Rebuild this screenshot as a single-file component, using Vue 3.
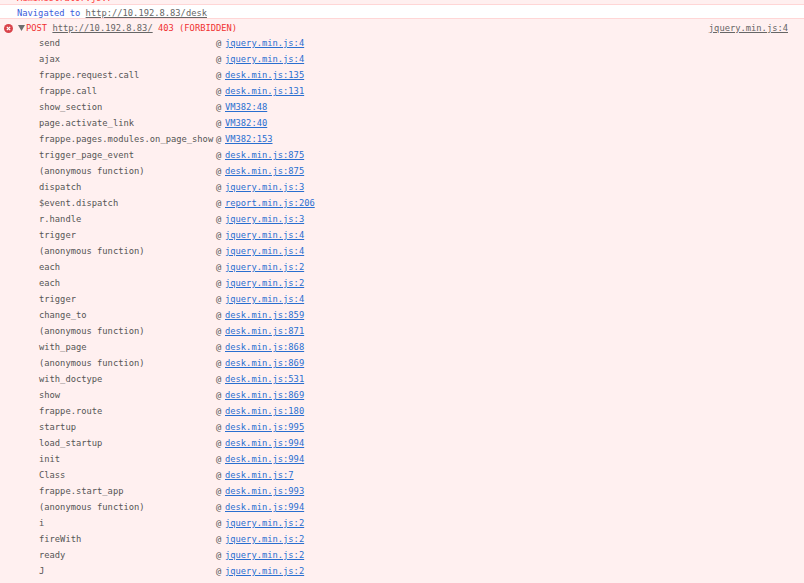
<script setup>
const rows = [
  ['send', 'jquery.min.js:4'],
  ['ajax', 'jquery.min.js:4'],
  ['frappe.request.call', 'desk.min.js:135'],
  ['frappe.call', 'desk.min.js:131'],
  ['show_section', 'VM382:48'],
  ['page.activate_link', 'VM382:40'],
  ['frappe.pages.modules.on_page_show', 'VM382:153'],
  ['trigger_page_event', 'desk.min.js:875'],
  ['(anonymous function)', 'desk.min.js:875'],
  ['dispatch', 'jquery.min.js:3'],
  ['$event.dispatch', 'report.min.js:206'],
  ['r.handle', 'jquery.min.js:3'],
  ['trigger', 'jquery.min.js:4'],
  ['(anonymous function)', 'jquery.min.js:4'],
  ['each', 'jquery.min.js:2'],
  ['each', 'jquery.min.js:2'],
  ['trigger', 'jquery.min.js:4'],
  ['change_to', 'desk.min.js:859'],
  ['(anonymous function)', 'desk.min.js:871'],
  ['with_page', 'desk.min.js:868'],
  ['(anonymous function)', 'desk.min.js:869'],
  ['with_doctype', 'desk.min.js:531'],
  ['show', 'desk.min.js:869'],
  ['frappe.route', 'desk.min.js:180'],
  ['startup', 'desk.min.js:995'],
  ['load_startup', 'desk.min.js:994'],
  ['init', 'desk.min.js:994'],
  ['Class', 'desk.min.js:7'],
  ['frappe.start_app', 'desk.min.js:993'],
  ['(anonymous function)', 'desk.min.js:994'],
  ['i', 'jquery.min.js:2'],
  ['fireWith', 'jquery.min.js:2'],
  ['ready', 'jquery.min.js:2'],
  ['J', 'jquery.min.js:2'],
]
</script>

<template>
  <div class="console">
    <div class="cut">
      <span class="cut-text">Administrator.js:7</span>
    </div>
    <div class="nav">
      Navigated to <span class="nav-link">http://10.192.8.83/desk</span>
    </div>
    <div class="error">
      <div class="head">
        <svg class="x" width="9" height="9" viewBox="0 0 9 9">
          <circle cx="4.5" cy="4.5" r="4.5" fill="#d9434a" />
          <path d="M2.8 2.8l3.4 3.4M6.2 2.8l-3.4 3.4" stroke="#fff" stroke-width="1.2" fill="none" />
        </svg>
        <svg class="tri" width="7" height="6" viewBox="0 0 7 6">
          <path d="M0 0h7L3.5 6z" fill="#6e6e6e" />
        </svg>
        <span class="msg">POST <span class="grey-link">http://10.192.8.83/</span> 403 (FORBIDDEN)</span>
        <span class="src">jquery.min.js:4</span>
      </div>
      <div class="stack">
        <div v-for="(r, i) in rows" :key="i" class="row">
          <span class="fn">{{ r[0] }}</span>
          <span class="at">@</span>
          <span class="link">{{ r[1] }}</span>
        </div>
      </div>
    </div>
  </div>
</template>

<style scoped>
.console {
  width: 804px;
  height: 583px;
  overflow: hidden;
  background: #fff0f0;
  font-family: "DejaVu Sans Mono", "Liberation Mono", monospace;
  font-size: 8.78px;
  color: #555;
}
.cut {
  height: 4px;
  overflow: hidden;
  border-bottom: 1px solid #ffd6d6;
}
.cut-text {
  display: block;
  margin-top: -7px;
  margin-left: 17px;
  line-height: 10px;
  color: #f33;
}
.nav {
  height: 13px;
  line-height: 16px;
  background: #fff;
  color: #3b5bdb;
  padding-left: 17px;
  border-bottom: 1px solid #ffd6d6;
}
.nav-link { color: #666; text-decoration: underline; }
.head {
  display: flex;
  align-items: center;
  box-sizing: border-box;
  height: 16px;
  padding: 2px 16px 0 4px;
}
.x { flex: none; }
.tri { flex: none; margin-left: 5px; }
.msg { margin-left: 1px; color: #f03030; white-space: pre; }
.grey-link { color: #666; text-decoration: underline; }
.src { margin-left: auto; color: #666; text-decoration: underline; }
.row {
  display: flex;
  height: 16px;
  line-height: 16px;
  padding-left: 39px;
  white-space: pre;
}
.fn { width: 177px; flex: none; color: #555; }
.at { width: 9px; flex: none; color: #555; }
.link { color: #2a6fd0; text-decoration: underline; }
</style>
